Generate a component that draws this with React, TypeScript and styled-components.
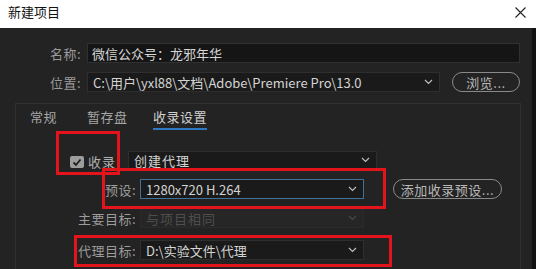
import React from "react";
import styled, { createGlobalStyle } from "styled-components";

const Global = createGlobalStyle`
  html, body { margin: 0; padding: 0; background: #232323; }
  body { width: 536px; height: 269px; overflow: hidden; font-family: "Noto Sans CJK SC", "Noto Sans", sans-serif; }
`;

const Window = styled.div`
  position: relative;
  width: 536px;
  height: 269px;
  overflow: hidden;
  background: #232323;
  display: flex;
  flex-direction: column;
`;

const TitleBar = styled.div`
  height: 28px;
  background: #ffffff;
  display: flex;
  align-items: center;
  justify-content: space-between;
  padding: 0 10px 0 8px;
  box-sizing: border-box;
  font-size: 13px;
  color: #111;
`;

const Title = styled.span`
  line-height: 28px;
  margin-top: -4px;
`;

const Body = styled.div`
  flex: 1;
  display: flex;
  flex-direction: column;
  border-right: 4px solid #121212;
`;

const TopRow = styled.div<{ $mt: number }>`
  display: flex;
  align-items: center;
  margin-top: ${(p) => p.$mt}px;
  height: 20px;
`;

const TopLabel = styled.span`
  width: 81px;
  text-align: right;
  font-size: 13px;
  letter-spacing: 0.5px;
  color: #9a9a9a;
  margin-right: 6px;
`;

const NameInput = styled.div`
  width: 433px;
  height: 20px;
  box-sizing: border-box;
  background: #151515;
  border: 1px solid #303030;
  color: #d6d6d6;
  font-size: 13px;
  display: flex;
  align-items: center;
  padding-left: 4px;
`;

const Select = styled.div<{ $w: number; $h?: number; $variant?: "normal" | "focus" | "disabled" }>`
  width: ${(p) => p.$w}px;
  height: ${(p) => p.$h ?? 20}px;
  box-sizing: border-box;
  background: ${(p) => (p.$variant === "disabled" ? "#262626" : "#1a1a1a")};
  border: 1px solid ${(p) => (p.$variant === "focus" ? "#3f7199" : p.$variant === "disabled" ? "#2b2b2b" : "#2e2e2e")};
  color: ${(p) => (p.$variant === "disabled" ? "#4e4e4e" : "#d4d4d4")};
  font-size: 13px;
  display: flex;
  align-items: center;
  justify-content: space-between;
  padding: 0 6px 0 5px;
  white-space: nowrap;
  overflow: hidden;
`;

const Chevron = ({ dim }: { dim?: boolean }) => (
  <svg width="9" height="6" viewBox="0 0 9 6">
    <polyline points="1,1 4.5,4.5 8,1" fill="none" stroke={dim ? "#4a4a4a" : "#bdbdbd"} strokeWidth="1.2" />
  </svg>
);

const PillButton = styled.div<{ $w: number; $ml: number }>`
  width: ${(p) => p.$w}px;
  height: 20px;
  margin-left: ${(p) => p.$ml}px;
  box-sizing: border-box;
  border: 1px solid #8a8a8a;
  border-radius: 10px;
  color: #b8b8b8;
  font-size: 13px;
  display: flex;
  align-items: center;
  justify-content: center;
  letter-spacing: 0.5px;
`;

const Panel = styled.div`
  margin: 11px 0 0 15px;
  width: 506px;
  flex: 1;
  box-sizing: border-box;
  border: 1px solid #303030;
  border-bottom: none;
  display: flex;
  flex-direction: column;
`;

const Tabs = styled.div`
  display: grid;
  grid-template-columns: 57px 66px auto;
  justify-items: start;
  height: 25px;
  padding-left: 14px;
`;

const Tab = styled.div<{ $active?: boolean }>`
  font-size: 13px;
  color: ${(p) => (p.$active ? "#d0d0d0" : "#a6a6a6")};
  letter-spacing: 0.5px;
  line-height: 24px;
  margin-top: 1px;
  height: 23px;
  border-bottom: 2px solid ${(p) => (p.$active ? "#2f78c4" : "transparent")};
`;

const RecordRow = styled.div`
  display: flex;
  align-items: center;
  margin: 22px 0 0 54px;
  height: 18px;
`;

const Checkbox = styled.div`
  width: 14px;
  height: 12px;
  margin-top: 4px;
  border-radius: 2px;
  background: #9d9d9d;
  display: flex;
  align-items: center;
  justify-content: center;
`;

const CheckLabel = styled.span`
  font-size: 13px;
  letter-spacing: 1px;
  color: #b0b0b0;
  margin: 2px 12px 0 4px;
`;

const FormRow = styled.div<{ $mt: number }>`
  display: flex;
  align-items: center;
  margin-top: ${(p) => p.$mt}px;
  height: 20px;
`;

const FormLabel = styled.span`
  width: 124px;
  text-align: right;
  padding-right: 4px;
  box-sizing: border-box;
  font-size: 13px;
  letter-spacing: 0.5px;
  color: #9c9c9c;
`;

const Annotation = styled.div<{ $x: number; $y: number; $w: number; $h: number }>`
  position: absolute;
  left: ${(p) => p.$x}px;
  top: ${(p) => p.$y}px;
  width: ${(p) => p.$w}px;
  height: ${(p) => p.$h}px;
  box-sizing: border-box;
  border: 3px solid #e3141b;
  pointer-events: none;
`;

export default function App() {
  return (
    <>
      <Global />
      <Window>
        <TitleBar>
          <Title>新建项目</Title>
          <svg width="11" height="11" viewBox="0 0 11 11" style={{ marginTop: -4 }}>
            <path d="M0.5 0.5 L10.5 10.5 M10.5 0.5 L0.5 10.5" stroke="#222" strokeWidth="1.1" />
          </svg>
        </TitleBar>
        <Body>
          <TopRow $mt={15}>
            <TopLabel>名称:</TopLabel>
            <NameInput>微信公众号：龙邪年华</NameInput>
          </TopRow>
          <TopRow $mt={9}>
            <TopLabel>位置:</TopLabel>
            <Select $w={353}>
              <span>C:\用户\yxl88\文档\Adobe\Premiere Pro\13.0</span>
              <Chevron />
            </Select>
            <PillButton $w={68} $ml={12}>浏览...</PillButton>
          </TopRow>
          <Panel>
            <Tabs>
              <Tab>常规</Tab>
              <Tab>暂存盘</Tab>
              <Tab $active>收录设置</Tab>
            </Tabs>
            <RecordRow>
              <Checkbox>
                <svg width="10" height="9" viewBox="0 0 10 9">
                  <polyline points="1.5,4.5 4,7 8.5,1.5" fill="none" stroke="#1e1e1e" strokeWidth="1.8" />
                </svg>
              </Checkbox>
              <CheckLabel>收录</CheckLabel>
              <Select $w={249} $h={18}>
                <span style={{ letterSpacing: 1 }}>创建代理</span>
                <Chevron />
              </Select>
            </RecordRow>
            <FormRow $mt={10}>
              <FormLabel>预设:</FormLabel>
              <Select $w={224} $variant="focus">
                <span>1280x720 H.264</span>
                <Chevron />
              </Select>
              <PillButton $w={109} $ml={29}>添加收录预设...</PillButton>
            </FormRow>
            <FormRow $mt={9}>
              <FormLabel>主要目标:</FormLabel>
              <Select $w={224} $variant="disabled">
                <span style={{ letterSpacing: 1 }}>与项目相同</span>
                <Chevron dim />
              </Select>
            </FormRow>
            <FormRow $mt={12}>
              <FormLabel>代理目标:</FormLabel>
              <Select $w={224}>
                <span>D:\实验文件\代理</span>
                <Chevron />
              </Select>
            </FormRow>
          </Panel>
        </Body>
        <Annotation $x={56} $y={131} $w={64} $h={44} />
        <Annotation $x={102} $y={168} $w={284} $h={41} />
        <Annotation $x={74} $y={235} $w={318} $h={32} />
      </Window>
    </>
  );
}
